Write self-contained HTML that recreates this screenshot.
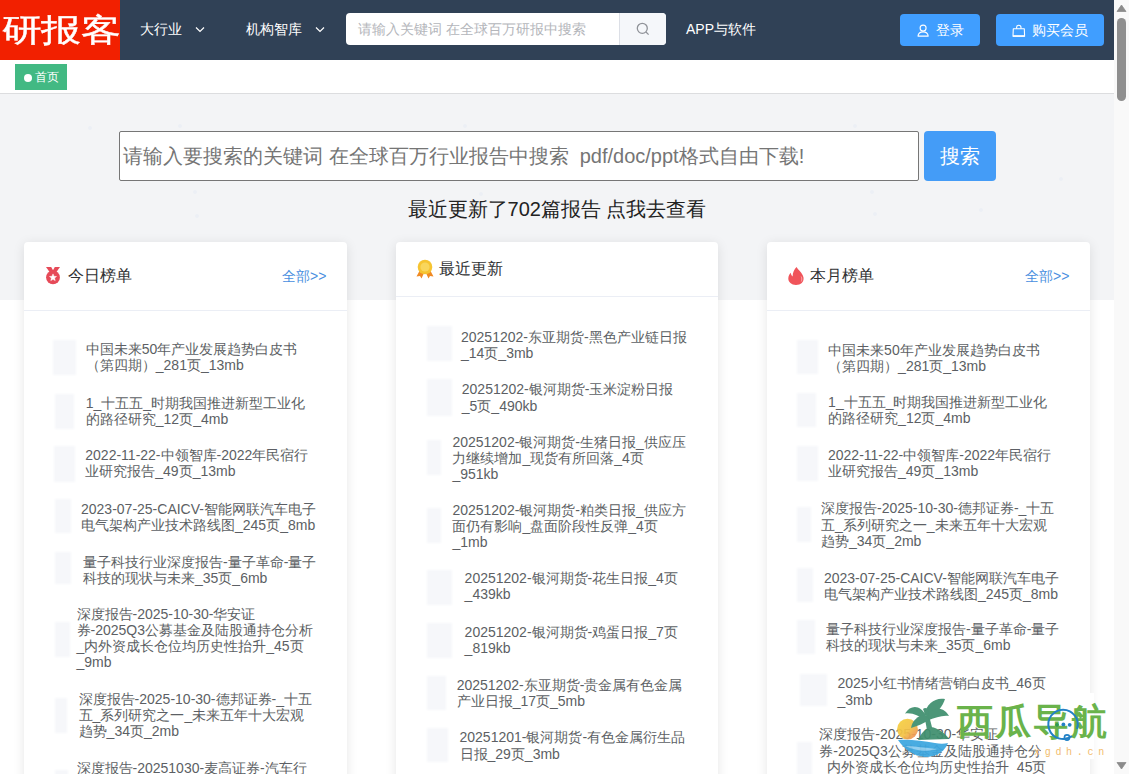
<!DOCTYPE html>
<html><head><meta charset="utf-8">
<style>
*{margin:0;padding:0;box-sizing:border-box}
html,body{width:1129px;height:774px;overflow:hidden;background:#fff;font-family:"Liberation Sans",sans-serif;}
.abs{position:absolute}
#hdr{position:absolute;left:0;top:0;width:1114px;height:60px;background:#304156}
#logo{position:absolute;left:0;top:0;width:120px;height:60px;background:#f22000;color:#fff;font-size:38px;line-height:60px;white-space:nowrap;letter-spacing:0}
.nav{position:absolute;top:0;height:60px;line-height:58px;color:#fff;font-size:14px;white-space:nowrap}
.chev{position:absolute}
#hsearch{position:absolute;left:346px;top:13px;width:320px;height:32px;background:#fff;border-radius:4px;overflow:hidden}
#hsearch .ph{position:absolute;left:12px;top:0;line-height:32px;font-size:14px;color:#b4b6bb;white-space:nowrap}
#hsearch .ap{position:absolute;left:273px;top:0;width:47px;height:32px;background:#f5f7fa;border-left:1px solid #dcdfe6}
.btn{position:absolute;top:14px;height:32px;background:#409eff;border-radius:4px;color:#fff;font-size:14px;line-height:32px;white-space:nowrap}
#tags{position:absolute;left:0;top:60px;width:1114px;height:34px;background:#fff;border-bottom:1px solid #dcdddf;box-shadow:0 1px 2px 0 rgba(0,0,0,.05)}
#tag{position:absolute;left:15px;top:4px;width:52px;height:26px;background:#42b983;border:1px solid #42b983;color:#fff;font-size:12px;line-height:24px;white-space:nowrap}
#tag i{position:absolute;left:8px;top:8.5px;width:8px;height:8px;border-radius:50%;background:#fff}
#tag span{position:absolute;left:19px;top:0}
#band{position:absolute;left:0;top:94px;width:1114px;height:206px;background:#f3f4f6}
#below{position:absolute;left:0;top:300px;width:1114px;height:474px;background:#fff}
#bigs{position:absolute;left:119px;top:131px;width:800px;height:50px;background:#fff;border:1px solid #767676;border-radius:2px}
#bigs .ph{position:absolute;left:3px;top:0;line-height:48px;font-size:20px;color:#757575;white-space:nowrap}
#bigbtn{position:absolute;left:924px;top:131px;width:72px;height:50px;background:#449cf7;border-radius:4px;color:#fff;font-size:20px;line-height:50px;text-align:center}
#recent{position:absolute;left:0;top:197.3px;width:1114px;text-align:center;font-size:20px;line-height:24px;color:#222;white-space:nowrap}
.card{position:absolute;top:242px;height:600px;background:#fff;border-radius:4px;box-shadow:0 2px 12px 0 rgba(0,0,0,.1);overflow:hidden}
.card .hd{position:absolute;left:0;top:0;width:100%;border-bottom:1px solid #ebeef5}
.ttl{position:absolute;font-size:16px;color:#303133;white-space:nowrap;line-height:20px}
.all{position:absolute;font-size:14px;color:#4a8fe0;white-space:nowrap;line-height:18px}
.it{position:absolute;font-size:14px;color:#5c5f64;line-height:16.3px;white-space:nowrap}
.th{position:absolute;background:#f6f7fa;filter:blur(0.8px);width:22px;height:35px}
#sb{position:absolute;left:1114px;top:0;width:15px;height:774px;background:#f9f9f9}
</style></head><body>
<div id="hdr">
  <div id="logo"><span style="position:absolute;left:2px;top:-0.5px;-webkit-text-stroke:0.5px #fff;transform-origin:0 30px;transform:scale(1.035,0.83)">研报客</span></div>
  <div class="nav" style="left:140px">大行业</div>
  <svg class="chev" style="left:194px;top:26px" width="12" height="8" viewBox="0 0 12 8"><polyline points="2,1.5 6,5.5 10,1.5" fill="none" stroke="#fff" stroke-width="1.2"/></svg>
  <div class="nav" style="left:246px">机构智库</div>
  <svg class="chev" style="left:314px;top:26px" width="12" height="8" viewBox="0 0 12 8"><polyline points="2,1.5 6,5.5 10,1.5" fill="none" stroke="#fff" stroke-width="1.2"/></svg>
  <div id="hsearch"><div class="ph">请输入关键词 在全球百万研报中搜索</div>
    <div class="ap"><svg style="position:absolute;left:16px;top:9px" width="14" height="14" viewBox="0 0 14 14"><circle cx="6.3" cy="6.3" r="5" fill="none" stroke="#909399" stroke-width="1.3"/><line x1="10" y1="10" x2="12.6" y2="12.6" stroke="#909399" stroke-width="1.3"/></svg></div>
  </div>
  <div class="nav" style="left:686px">APP与软件</div>
  <div class="btn" style="left:900px;width:80px">
    <svg style="position:absolute;left:16.5px;top:9.5px" width="14" height="14" viewBox="0 0 14 14"><circle cx="6.1" cy="4.1" r="3" fill="none" stroke="#fff" stroke-width="1.1"/><path d="M1 12.1 C1.3 9.2 3.5 7.9 6.1 7.9 C8.7 7.9 10.9 9.2 11.2 12.1 Z" fill="none" stroke="#fff" stroke-width="1.1" stroke-linejoin="round"/></svg>
    <span style="position:absolute;left:36px;top:0">登录</span></div>
  <div class="btn" style="left:996px;width:108px">
    <svg style="position:absolute;left:16px;top:9.5px" width="14" height="14" viewBox="0 0 14 14"><path d="M1.3 4.8 H12.3 L12.6 12.2 H1 Z" fill="none" stroke="#fff" stroke-width="1.1" stroke-linejoin="round"/><path d="M4.6 4.8 V3.4 A2.2 2.2 0 0 1 9 3.4 V4.8" fill="none" stroke="#fff" stroke-width="1.1"/><line x1="1" y1="12" x2="12.6" y2="12" stroke="#fff" stroke-width="1.6"/></svg>
    <span style="position:absolute;left:36px;top:0">购买会员</span></div>
</div>
<div id="tags"><div id="tag"><i></i><span>首页</span></div></div>
<div id="band"></div><div class="abs" style="left:177.7px;top:123.5px;width:4px;height:4px;border-radius:50%;background:#eceff5"></div><div class="abs" style="left:193.2px;top:189.9px;width:4px;height:4px;border-radius:50%;background:#eceff5"></div><div class="abs" style="left:195.4px;top:214.3px;width:4px;height:4px;border-radius:50%;background:#eceff5"></div><div class="abs" style="left:463.4px;top:123.5px;width:4px;height:4px;border-radius:50%;background:#eceff5"></div><div class="abs" style="left:478.9px;top:192.1px;width:4px;height:4px;border-radius:50%;background:#eceff5"></div><div class="abs" style="left:852.6px;top:123.5px;width:4px;height:4px;border-radius:50%;background:#eceff5"></div><div class="abs" style="left:870.4px;top:189.9px;width:4px;height:4px;border-radius:50%;background:#eceff5"></div><div class="abs" style="left:872.6px;top:212.0px;width:4px;height:4px;border-radius:50%;background:#eceff5"></div><div class="abs" style="left:1058.6px;top:176.6px;width:4px;height:4px;border-radius:50%;background:#eceff5"></div><div class="abs" style="left:978.9px;top:207.6px;width:4px;height:4px;border-radius:50%;background:#eceff5"></div><div class="abs" style="left:87.5px;top:125.6px;width:4px;height:4px;border-radius:50%;background:#eceff5"></div>
<div id="below"></div>
<div id="bigs"><div class="ph">请输入要搜索的关键词 在全球百万行业报告中搜索&nbsp; pdf/doc/ppt格式自由下载!</div></div>
<div id="bigbtn">搜索</div>
<div id="recent">最近更新了702篇报告 点我去查看</div>

<!-- CARDS -->
<div class="card" style="left:24px;width:323px"><div class="hd" style="height:69px"></div></div>
<div class="card" style="left:396px;width:322px"><div class="hd" style="height:55px"></div></div>
<div class="card" style="left:767px;width:323px"><div class="hd" style="height:69px"></div></div>
<svg class="abs" style="left:45px;top:266px" width="16" height="19" viewBox="0 0 16 19"><path d="M1 1 H6.2 L9.6 7 L5.6 7.6 Z" fill="#e64a58"/><path d="M15 1 H9.8 L6.4 7 L10.4 7.6 Z" fill="#e64a58"/><circle cx="8" cy="11.4" r="6.9" fill="#e64a58"/><path d="M8 7.9 L9 10.3 L11.5 10.5 L9.6 12.1 L10.2 14.6 L8 13.3 L5.8 14.6 L6.4 12.1 L4.5 10.5 L7 10.3 Z" fill="#fff" stroke="#fff" stroke-width="0.5" stroke-linejoin="round"/></svg>
<div class="ttl" style="left:67.5px;top:266px">今日榜单</div>
<div class="all" style="left:282px;top:267px">全部&gt;&gt;</div>
<svg class="abs" style="left:416px;top:259px" width="18" height="20" viewBox="0 0 18 20"><path d="M4 11 L0.5 17.5 L4 17 L5.5 19.5 L8.5 13 Z" fill="#f08a24"/><path d="M14 11 L17.5 17.5 L14 17 L12.5 19.5 L9.5 13 Z" fill="#f08a24"/><circle cx="9" cy="8" r="7.3" fill="#f6c431"/><circle cx="9" cy="8" r="4.6" fill="#f9d65c"/></svg>
<div class="ttl" style="left:439px;top:259.2px">最近更新</div>
<svg class="abs" style="left:787px;top:266px" width="18" height="20" viewBox="0 0 18 20"><path d="M9.5 1 C11 4 15.5 6.5 16.5 11.5 C17.2 16 13.8 19 9 19 C4.5 19 1.2 16.2 1.3 12.3 C1.4 9.8 2.6 8 3.8 6.8 C4 8.6 4.6 9.8 5.6 10.4 C5.6 6.5 7.5 3.2 9.5 1 Z" fill="#f0545a"/><path d="M14.2 10.5 C15 12 15 14 14.3 15.5" stroke="#fff" stroke-width="0.7" fill="none" opacity="0.7"/></svg>
<div class="ttl" style="left:810px;top:266px">本月榜单</div>
<div class="all" style="left:1025px;top:267px">全部&gt;&gt;</div>
<div class="th" style="left:53.4px;top:340.0px;width:22.3px;height:34.5px"></div>
<div class="it" style="left:85.8px;top:341.2px">中国未来50年产业发展趋势白皮书<br>（第四期）_281页_13mb</div>
<div class="th" style="left:55.0px;top:394.4px;width:18.8px;height:34.6px"></div>
<div class="it" style="left:85.8px;top:395.0px">1_十五五_时期我国推进新型工业化<br>的路径研究_12页_4mb</div>
<div class="th" style="left:54.4px;top:446.0px;width:20.8px;height:35.8px"></div>
<div class="it" style="left:85.3px;top:447.2px">2022-11-22-中领智库-2022年民宿行<br>业研究报告_49页_13mb</div>
<div class="th" style="left:55.2px;top:499.0px;width:16.0px;height:33.5px"></div>
<div class="it" style="left:81.0px;top:500.6px">2023-07-25-CAICV-智能网联汽车电子<br>电气架构产业技术路线图_245页_8mb</div>
<div class="th" style="left:55.0px;top:552.0px;width:16.0px;height:32.0px"></div>
<div class="it" style="left:83.0px;top:553.7px">量子科技行业深度报告-量子革命-量子<br>科技的现状与未来_35页_6mb</div>
<div class="th" style="left:55.0px;top:621.6px;width:15.0px;height:35.8px"></div>
<div class="it" style="left:76.5px;top:605.6px">深度报告-2025-10-30-华安证<br>券-2025Q3公募基金及陆股通持仓分析<br>_内外资成长仓位均历史性抬升_45页<br>_9mb</div>
<div class="th" style="left:55.0px;top:698.0px;width:12.0px;height:35.0px"></div>
<div class="it" style="left:78.6px;top:690.6px">深度报告-2025-10-30-德邦证券-_十五<br>五_系列研究之一_未来五年十大宏观<br>趋势_34页_2mb</div>
<div class="th" style="left:55.0px;top:770.0px;width:13.0px;height:35.0px"></div>
<div class="it" style="left:76.5px;top:759.6px">深度报告-20251030-麦高证券-汽车行<br>业深度报告</div>
<div class="th" style="left:427.0px;top:325.6px;width:25.4px;height:35.4px"></div>
<div class="it" style="left:461.0px;top:328.9px">20251202-东亚期货-黑色产业链日报<br>_14页_3mb</div>
<div class="th" style="left:427.0px;top:379.4px;width:25.4px;height:36.9px"></div>
<div class="it" style="left:461.8px;top:381.4px">20251202-银河期货-玉米淀粉日报<br>_5页_490kb</div>
<div class="th" style="left:427.0px;top:440.0px;width:14.0px;height:35.0px"></div>
<div class="it" style="left:452.4px;top:433.8px">20251202-银河期货-生猪日报_供应压<br>力继续增加_现货有所回落_4页<br>_951kb</div>
<div class="th" style="left:427.0px;top:508.0px;width:14.0px;height:35.0px"></div>
<div class="it" style="left:452.4px;top:501.8px">20251202-银河期货-粕类日报_供应方<br>面仍有影响_盘面阶段性反弹_4页<br>_1mb</div>
<div class="th" style="left:427.0px;top:570.0px;width:25.0px;height:34.7px"></div>
<div class="it" style="left:464.6px;top:569.8px">20251202-银河期货-花生日报_4页<br>_439kb</div>
<div class="th" style="left:427.0px;top:623.0px;width:25.0px;height:35.0px"></div>
<div class="it" style="left:464.6px;top:623.6px">20251202-银河期货-鸡蛋日报_7页<br>_819kb</div>
<div class="th" style="left:427.0px;top:675.5px;width:19.0px;height:34.0px"></div>
<div class="it" style="left:456.7px;top:676.6px">20251202-东亚期货-贵金属有色金属<br>产业日报_17页_5mb</div>
<div class="th" style="left:427.0px;top:728.0px;width:21.0px;height:34.0px"></div>
<div class="it" style="left:459.5px;top:729.3px">20251201-银河期货-有色金属衍生品<br>日报_29页_3mb</div>
<div class="th" style="left:797.0px;top:339.8px;width:21.0px;height:34.0px"></div>
<div class="it" style="left:828.1px;top:341.7px">中国未来50年产业发展趋势白皮书<br>（第四期）_281页_13mb</div>
<div class="th" style="left:797.0px;top:393.0px;width:19.0px;height:34.0px"></div>
<div class="it" style="left:828.1px;top:394.1px">1_十五五_时期我国推进新型工业化<br>的路径研究_12页_4mb</div>
<div class="th" style="left:797.0px;top:446.0px;width:21.0px;height:35.0px"></div>
<div class="it" style="left:828.0px;top:447.1px">2022-11-22-中领智库-2022年民宿行<br>业研究报告_49页_13mb</div>
<div class="th" style="left:797.0px;top:507.0px;width:14.0px;height:35.0px"></div>
<div class="it" style="left:821.0px;top:500.3px">深度报告-2025-10-30-德邦证券-_十五<br>五_系列研究之一_未来五年十大宏观<br>趋势_34页_2mb</div>
<div class="th" style="left:797.0px;top:568.0px;width:16.0px;height:34.0px"></div>
<div class="it" style="left:823.9px;top:569.8px">2023-07-25-CAICV-智能网联汽车电子<br>电气架构产业技术路线图_245页_8mb</div>
<div class="th" style="left:797.0px;top:620.0px;width:18.0px;height:34.0px"></div>
<div class="it" style="left:826.1px;top:620.8px">量子科技行业深度报告-量子革命-量子<br>科技的现状与未来_35页_6mb</div>
<div class="th" style="left:800.0px;top:673.8px;width:27.0px;height:31.8px"></div>
<div class="it" style="left:837.4px;top:675.4px">2025小红书情绪营销白皮书_46页<br>_3mb</div>
<div class="th" style="left:797.0px;top:742.0px;width:15.0px;height:36.0px"></div>
<div class="it" style="left:819.3px;top:726.3px">深度报告-2025-10-30-华安证<br>券-2025Q3公募基金及陆股通持仓分<br>_内外资成长仓位均历史性抬升_45页<br>_9mb</div>
<div id="sb">
<svg style="position:absolute;left:0;top:0" width="15" height="774" viewBox="0 0 15 774">
<path d="M3 11.5 L12 11.5 L7.5 5 Z" fill="#8b8b8b" stroke="#8b8b8b" stroke-width="0.8" stroke-linejoin="round"/>
<rect x="3" y="18" width="9" height="83" rx="4.5" fill="#8f8f8f"/>
<path d="M3 762.5 L12 762.5 L7.5 769 Z" fill="#8b8b8b" stroke="#8b8b8b" stroke-width="0.8" stroke-linejoin="round"/>
</svg></div>
<div class="abs" style="left:1041px;top:693px;width:53px;height:66px;background:#fff"></div>
<div class="abs" style="left:895px;top:695px;width:220px;height:79px">
<svg style="position:absolute;left:-2px;top:-2px;opacity:.93" width="64" height="68" viewBox="0 0 64 68">
<defs><linearGradient id="sun" x1="0" y1="0" x2="1" y2="1"><stop offset="0" stop-color="#f6d23f"/><stop offset="0.55" stop-color="#f4c246"/><stop offset="1" stop-color="#ee7f5f"/></linearGradient></defs>
<circle cx="14.5" cy="36.2" r="10.4" fill="url(#sun)"/>
<g fill="#3f8f6e">
<path d="M25 47 C28 40 33 35 38 34 C45 35 52 40 56 46 Z"/>
<path d="M31 23 C33 30 34 37 35 46 L41 46 C40 37 38 30 36 23 Z"/>
<path d="M33 23 C28 12 18 11 12 20.5 C20 19.5 26 23 31 27 Z"/>
<path d="M31 21 C34 11 42 4 52 6 C50 13 44 20 37 25 Z"/>
<path d="M35 20 C43 13 52 15 56 23 C49 22 42 25 36 27 Z"/>
<path d="M32 22 C25 22 19 28 18 35 C25 33 31 30 36 27 Z"/>
<path d="M30 16 C32 14 35 15 36 19 L33 24 Z"/>
</g>
<path d="M5 47 C16 46 30 48 42 50 C47 51 51 51 55 50 C52 58 44 64 32 64 C20 63 11 56 5 47 Z" fill="#3ca6df"/>
<path d="M12 53 C22 53 32 55 44 56 C36 59 22 58 12 53 Z" fill="#8ccdf0"/>
</svg>
<div style="position:absolute;left:62px;top:9px;font-size:36px;line-height:36px;font-weight:bold;color:#6ab34b;letter-spacing:2px;white-space:nowrap">西瓜导航</div>
<svg style="position:absolute;left:0;top:0" width="220" height="79" viewBox="0 0 220 79">
<path d="M177 41 A14.7 14.7 0 1 1 182 34" fill="none" stroke="#2281c6" stroke-width="2"/>
<circle cx="162" cy="29.8" r="1.9" fill="#2f9a4e"/><circle cx="168.4" cy="29.4" r="1.9" fill="#2281c6"/><circle cx="174.7" cy="29.8" r="1.9" fill="#2281c6"/>
<circle cx="172" cy="42.5" r="2.6" fill="none" stroke="#2281c6" stroke-width="1.6"/>
</svg>
<div style="position:absolute;left:139px;top:52px;font-family:'Liberation Mono',monospace;font-size:10px;line-height:12px;color:#f2bd6e;letter-spacing:4.7px;white-space:nowrap">xgdh.cn</div>
</div>
</body></html>
